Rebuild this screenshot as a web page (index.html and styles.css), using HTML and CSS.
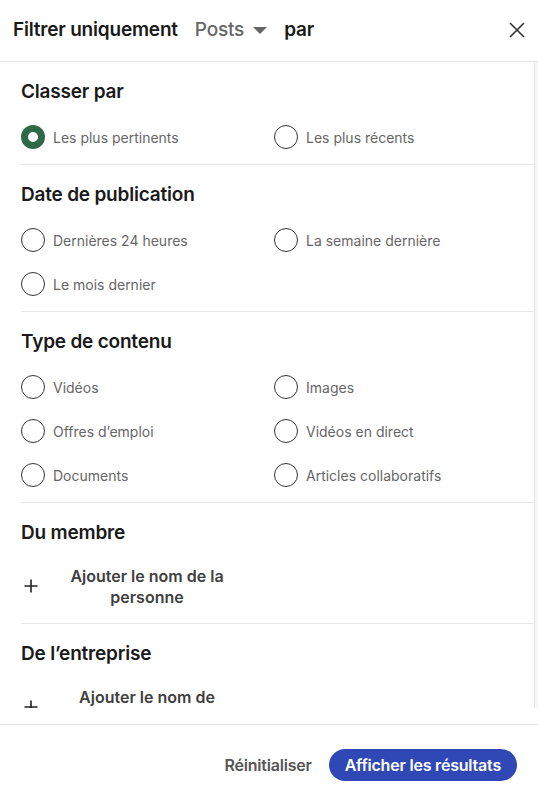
FILE: index.html
```html
<!DOCTYPE html>
<html lang="fr">
<head>
<meta charset="utf-8">
<title>Filtrer uniquement</title>
<link rel="stylesheet" href="styles.css">
</head>
<body>
<div class="modal">
  <header class="hdr">
    <h2 class="title">
      <span>Filtrer uniquement</span>
      <span class="type">Posts
        <svg class="caret" width="14" height="7" viewBox="0 0 14 7"><polygon points="0,0 14,0 7,7" fill="#666"/></svg>
      </span>
      <span>par</span>
    </h2>
    <button class="close" aria-label="Fermer">
      <svg width="16" height="16" viewBox="0 0 16 16"><path d="M1 1 L15 15 M15 1 L1 15" stroke="#333" stroke-width="1.6" fill="none"/></svg>
    </button>
  </header>

  <div class="body">
    <div class="scroll">
      <section class="sec">
        <h3 class="sec-title">Classer par</h3>
        <div class="opts">
          <label class="opt"><span class="radio checked"></span>Les plus pertinents</label>
          <label class="opt"><span class="radio"></span>Les plus récents</label>
        </div>
      </section>

      <section class="sec">
        <h3 class="sec-title">Date de publication</h3>
        <div class="opts">
          <label class="opt"><span class="radio"></span>Dernières 24 heures</label>
          <label class="opt"><span class="radio"></span>La semaine dernière</label>
          <label class="opt"><span class="radio"></span>Le mois dernier</label>
        </div>
      </section>

      <section class="sec">
        <h3 class="sec-title">Type de contenu</h3>
        <div class="opts">
          <label class="opt"><span class="radio"></span>Vidéos</label>
          <label class="opt"><span class="radio"></span>Images</label>
          <label class="opt"><span class="radio"></span>Offres d’emploi</label>
          <label class="opt"><span class="radio"></span>Vidéos en direct</label>
          <label class="opt"><span class="radio"></span>Documents</label>
          <label class="opt"><span class="radio"></span>Articles collaboratifs</label>
        </div>
      </section>

      <section class="sec">
        <h3 class="sec-title">Du membre</h3>
        <button class="add">
          <svg class="plus" width="14" height="14" viewBox="0 0 14 14"><path d="M7 0.5 V13.5 M0.5 7 H13.5" stroke="#222" stroke-width="1.6" fill="none"/></svg>
          <span class="add-text">Ajouter le nom de la personne</span>
        </button>
      </section>

      <section class="sec last">
        <h3 class="sec-title">De l’entreprise</h3>
        <button class="add">
          <svg class="plus" width="14" height="14" viewBox="0 0 14 14"><path d="M7 0.5 V13.5 M0.5 7 H13.5" stroke="#222" stroke-width="1.6" fill="none"/></svg>
          <span class="add-text">Ajouter le nom de l’entreprise</span>
        </button>
      </section>
    </div>
    <div class="track"></div>
  </div>

  <footer class="ftr">
    <button class="btn-reset">Réinitialiser</button>
    <button class="btn-primary">Afficher les résultats</button>
  </footer>
</div>
</body>
</html>
```

FILE: styles.css
```css
* { box-sizing: border-box; }
html, body { margin: 0; padding: 0; background: #fff; }
body {
  font-family: Inter, "Noto Sans", "Liberation Sans", sans-serif;
  color: #191919;
}
button { font-family: inherit; border: 0; background: none; padding: 0; cursor: pointer; }

.modal {
  width: 538px;
  height: 797px;
  display: flex;
  flex-direction: column;
}

.hdr {
  height: 62px;
  border-bottom: 1px solid #e3e3e3;
  display: flex;
  align-items: center;
  justify-content: space-between;
  padding: 0 12px 2px 13px;
  flex: none;
}
.title {
  margin: 0;
  display: flex;
  align-items: center;
  gap: 17px;
  font-size: 19px;
  font-weight: 600;
  color: #1a1a1a;
  letter-spacing: -0.2px;
}
.type {
  display: inline-flex;
  align-items: center;
  gap: 9px;
  color: #666;
  font-weight: 500;
  font-size: 19px;
}
.caret { display: block; margin-top: 1px; }
.close { display: flex; width: 18px; height: 18px; align-items: center; justify-content: center; }

.body {
  height: 646px;
  display: flex;
  flex: none;
}
.scroll {
  flex: 1;
  overflow: hidden;
  border-right: 1px solid #e6e6e6;
}
.track {
  width: 3px;
  background: #f6f6f6;
}

.sec {
  margin-left: 21px;
  padding: 16px 0 5px;
  border-bottom: 1px solid #e6e6e6;
}
.sec.last { border-bottom: 0; }
.sec-title {
  margin: 0 0 9px;
  font-size: 19px;
  line-height: 28px;
  font-weight: 600;
  color: #1a1a1a;
  letter-spacing: -0.2px;
}

.opts {
  display: grid;
  grid-template-columns: 253px 1fr;
}
.opt {
  height: 44px;
  display: flex;
  align-items: center;
  gap: 8px;
  font-size: 14px;
  color: #666;
}
.radio {
  width: 24px;
  height: 24px;
  border-radius: 50%;
  border: 1px solid #333;
  flex: none;
}
.radio.checked {
  border: 7px solid #2e6a47;
}

.add {
  display: flex;
  align-items: center;
  min-height: 62px;
  color: #404040;
}
.plus { margin-left: 3px; flex: none; display: block; margin-top: -2px; }
.add-text {
  width: 168px;
  margin-left: 25px;
  text-align: center;
  font-size: 16px;
  line-height: 21px;
  font-weight: 600;
}

.ftr {
  margin-top: auto;
  height: 73px;
  border-top: 1px solid #e3e3e3;
  display: flex;
  justify-content: flex-end;
  align-items: flex-start;
  padding: 24px 21px 0 0;
  gap: 17px;
  flex: none;
}
.btn-reset {
  height: 32px;
  font-size: 16px;
  font-weight: 600;
  color: #555;
  letter-spacing: -0.2px;
}
.btn-primary {
  height: 32px;
  padding: 0 16px;
  border-radius: 16px;
  background: #2f48b6;
  color: #fff;
  font-size: 16px;
  font-weight: 600;
  letter-spacing: -0.2px;
}
```
